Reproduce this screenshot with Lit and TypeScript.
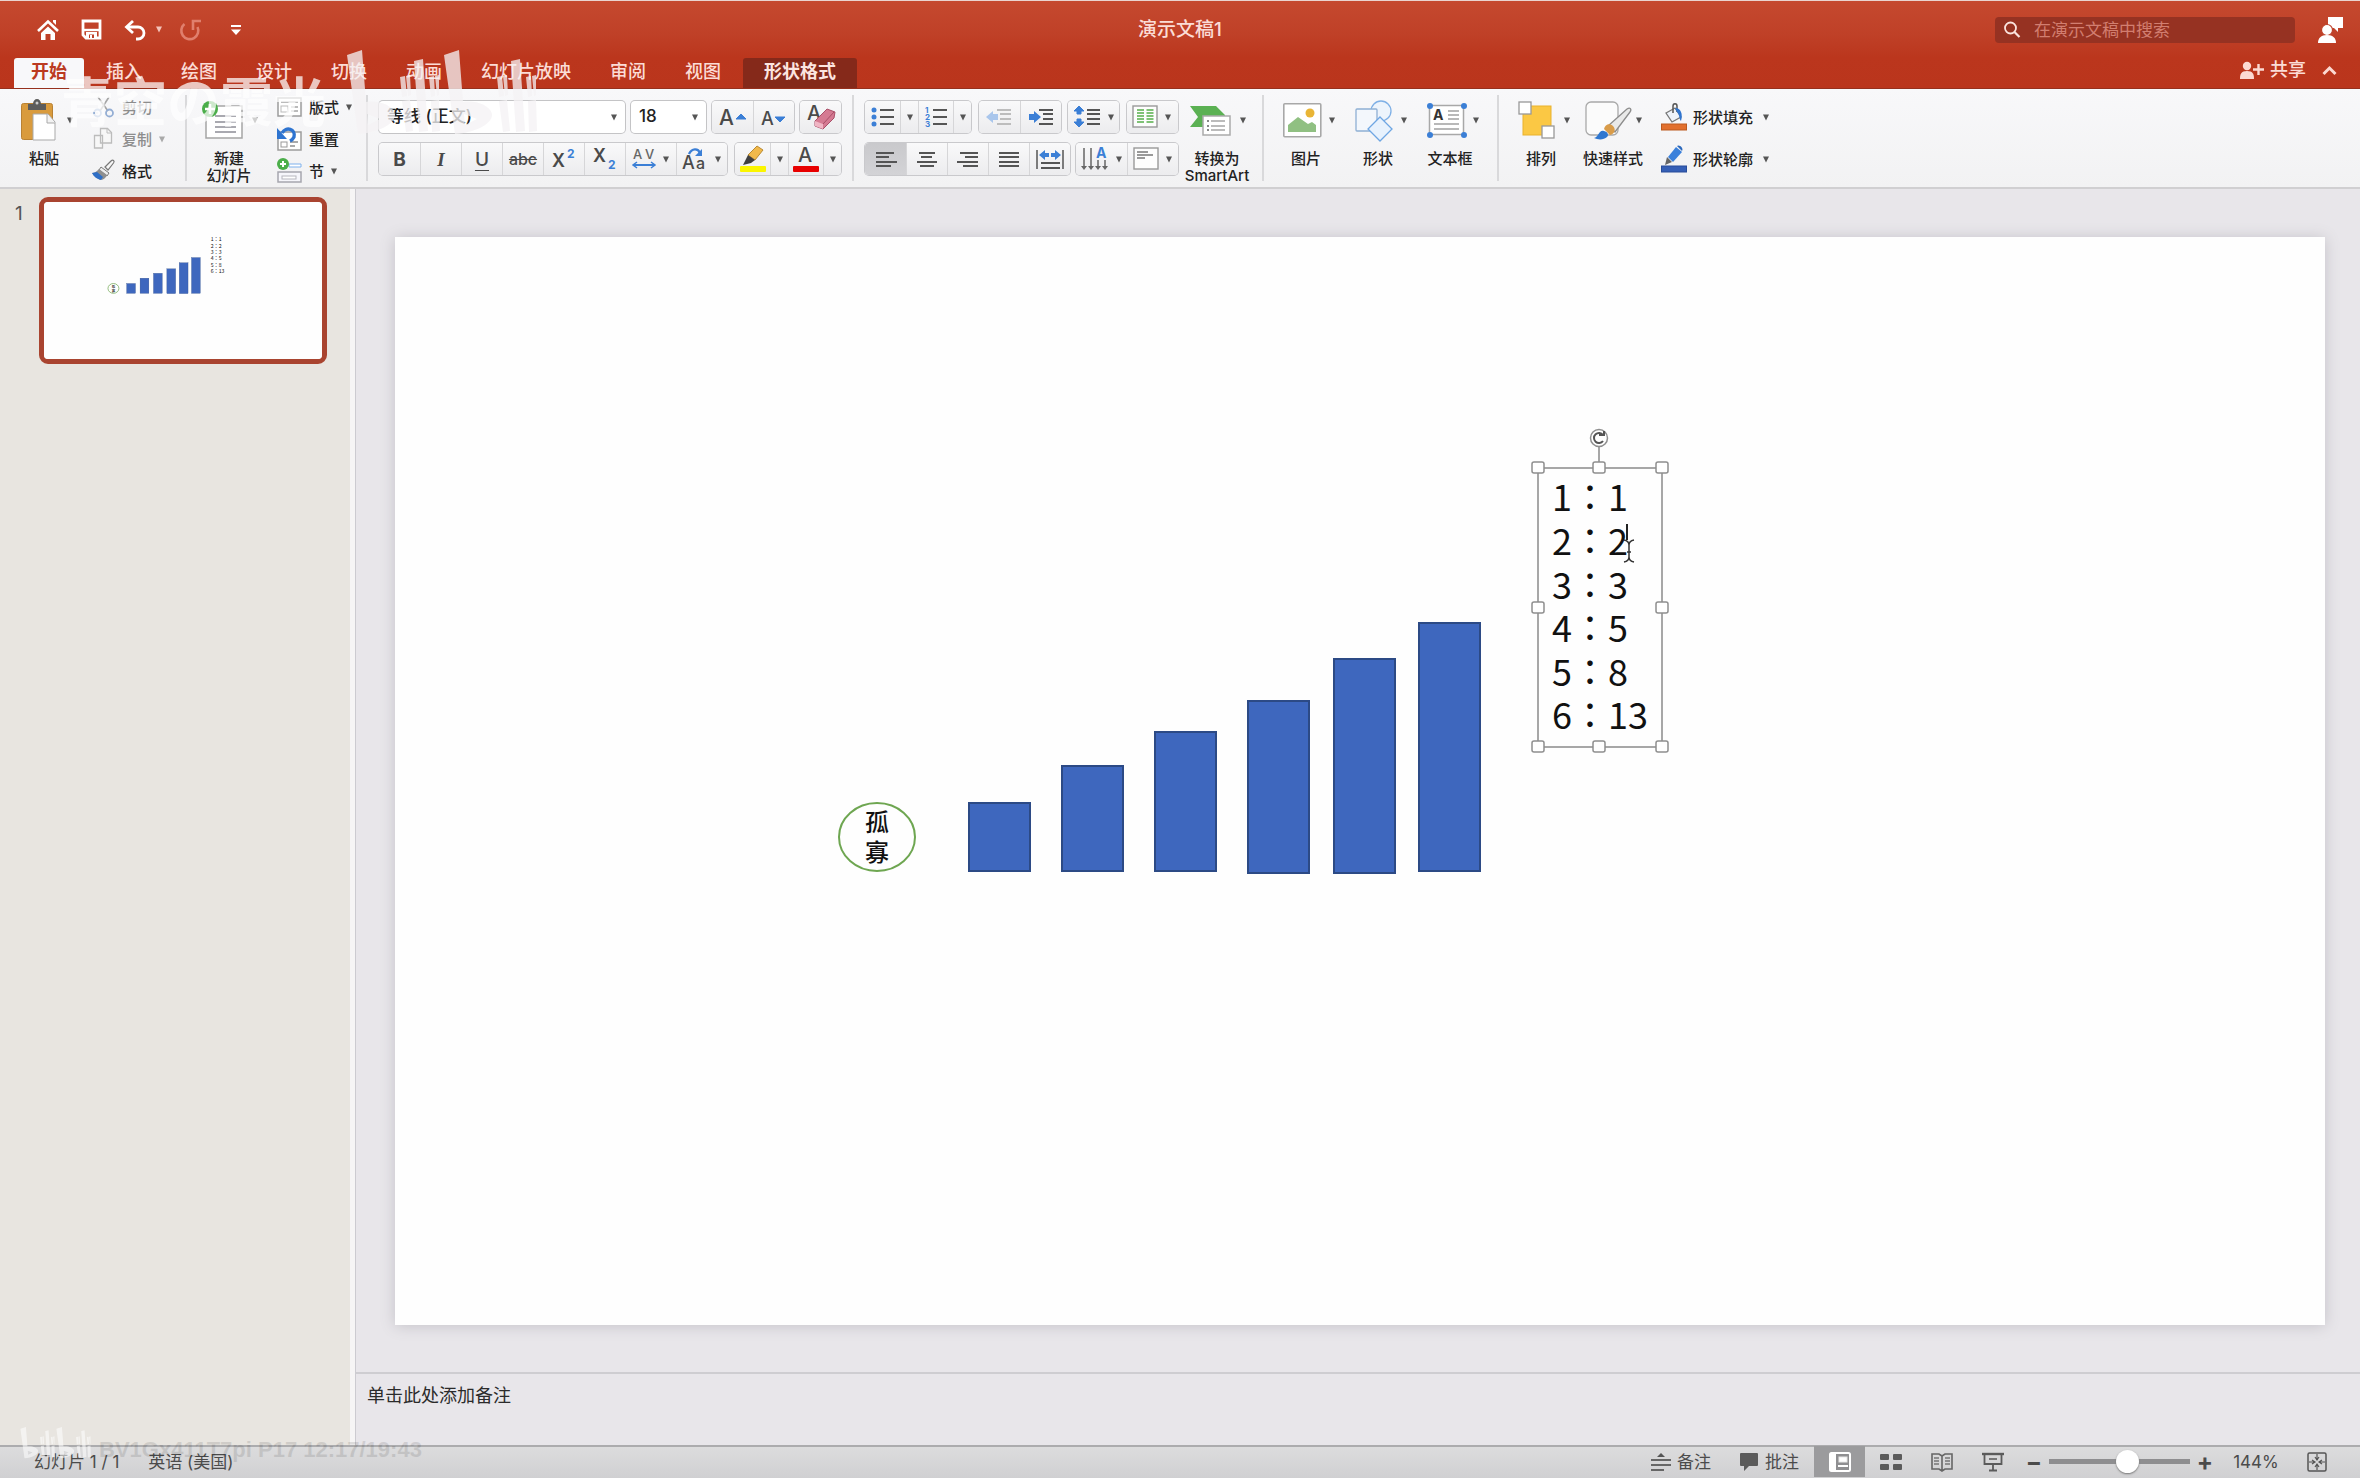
import { LitElement, html, svg, css, type TemplateResult } from "lit";
import { customElement, property, state } from "lit/decorators.js";
import { classMap } from "lit/directives/class-map.js";

type Art = TemplateResult;

/** Wraps icon shapes in an svg of the given pixel size. */
const icon = (w: number, h: number, body: Art) =>
  html`<svg class="icon" width=${w} height=${h} viewBox="0 0 ${w} ${h}" aria-hidden="true">${body}</svg>`;

const caret = (light = false) =>
  html`<svg class=${light ? "caret light" : "caret"} width="8" height="7" viewBox="0 0 8 7" aria-hidden="true"><path d="M1 0.5h6L4 6.5z" /></svg>`;

const lines = (rows: number[][], color = "#555") =>
  svg`${rows.map(([x1, x2, y]) => svg`<path d="M${x1} ${y}H${x2}" stroke=${color} stroke-width="2" />`)}`;

const BLUE = "#3b7fd6";
const DARK = "#4a4a4a";

/* ---------- title bar ---------- */
const homeIcon = icon(22, 22, svg`<path d="M1 12 11 2.500l10 9.500" fill="none" stroke="#fff" stroke-width="2.600"/><path d="M4 14l7-6.500 7 6.500v7h-4.500v-6h-5v6H4z" fill="#fff"/><path d="M16 1h3v5l-3-3z" fill="#fff"/>`);
const saveIcon = icon(21, 21, svg`<path d="M2 2h17v17H5l-3-3z" fill="none" stroke="#fff" stroke-width="2.800"/><path d="M2 11h17" stroke="#fff" stroke-width="2.400"/><path d="M5 13h11v7H5z" fill="#fff"/><path d="M8 15.500h5V19H8z" fill="#bd3f28"/><path d="M9 16h2v3H9z" fill="#fff"/>`);
const undoIcon = icon(23, 20, svg`<path d="M3 7h11a6 6 0 0 1 0 12h-2" fill="none" stroke="#fff" stroke-width="2.800"/><path d="M9 1 2.500 7 9 13" fill="none" stroke="#fff" stroke-width="2.800"/>`);
const redoIcon = icon(22, 22, svg`<path d="M4.500 5A8.500 8.500 0 1 0 17.500 8" fill="none" stroke="#e07f6d" stroke-width="2.600"/><path d="M21 2h-8v9" fill="none" stroke="#e07f6d" stroke-width="2.600"/>`);
const moreIcon = icon(12, 12, svg`<path d="M1 2h10" stroke="#fff" stroke-width="2"/><path d="M1 5.500h10L6 11z" fill="#fff"/>`);
const searchIcon = icon(18, 18, svg`<circle cx="7.500" cy="7" r="5.500" fill="none" stroke="#fbe3de" stroke-width="1.800"/><path d="m11.500 11 5 5" stroke="#fbe3de" stroke-width="2.200"/>`);
const feedbackIcon = icon(26, 26, svg`<path d="M10 0h15v11h-5v4l-4-4h-6z" fill="#fff"/><circle cx="9" cy="13" r="5.500" fill="#fff" stroke="#bd3f28" stroke-width="1.200"/><path d="M0 26c0-5 3-8 9-8s9 3 9 8z" fill="#fff"/>`);
const shareIcon = icon(24, 18, svg`<circle cx="7" cy="5" r="4.200" fill="#fcd9d2"/><path d="M0 18c0-5 1-8 7-8s7 3 7 8z" fill="#fcd9d2"/><path d="M18.500 3v11M13 8.500h11" stroke="#fcd9d2" stroke-width="2.400"/>`);
const chevronUp = icon(15, 10, svg`<path d="m1.500 8 6-6 6 6" fill="none" stroke="#fcd9d2" stroke-width="3"/>`);

/* ---------- large ribbon icons ---------- */
const pasteIcon = icon(40, 42, svg`<rect x="0.500" y="4.500" width="31" height="36" rx="2" fill="#d99b3d" stroke="#b98234"/><path d="M7 5h5a4 5 0 0 1 8 0h5v6H7z" fill="#5c5c5c"/><circle cx="16" cy="4" r="1.500" fill="#ccc"/><path d="M12 15h15l7 8v18H12z" fill="#fff" stroke="#a9a9a9"/><path d="M26 15v9h8" fill="#f2f2f2" stroke="#a9a9a9"/>`);
const newSlideIcon = icon(40, 42, svg`<rect x="0" y="7" width="36" height="32" fill="#fff" stroke="#a5a5a5" stroke-width="1.500"/>${lines([[9, 30, 17], [9, 30, 23], [9, 30, 28], [9, 30, 33]], "#a9a9b0")}<circle cx="4" cy="10" r="8" fill="#4bae4a"/><path d="M4 5v10M-1 10H9" stroke="#fff" stroke-width="2.500"/>`);
const smartArtIcon = icon(40, 36, svg`<path d="M-4 4h26l9 9v12H-4l8-10z" fill="#5bb153"/><rect x="9" y="14" width="27" height="19" fill="#fff" stroke="#aaa" stroke-width="1.500"/>${lines([[17, 31, 19], [17, 31, 24], [17, 31, 28]], "#bbb")}${lines([[13, 15, 19], [13, 15, 24], [13, 15, 28]], "#888")}`);
const pictureIcon = icon(40, 36, svg`<rect x="0.800" y="1.800" width="37" height="33" rx="1" fill="#fff" stroke="#a8a8a8" stroke-width="1.600"/><circle cx="27" cy="11" r="4.500" fill="#e9b535"/><path d="M5 30V23L15 15l10 7 4-2 4 3v7z" fill="#90c082"/>`);
const shapesIcon = icon(40, 40, svg`<circle cx="26" cy="11" r="10" fill="#edf4fc" stroke="#7fb0e6" stroke-width="1.300"/><rect x="1" y="9" width="21" height="22" rx="1" fill="#f3f7fc" stroke="#8fb0d4" stroke-width="1.300"/><path d="m25 17 12 12-12 12-12-12z" fill="#e8f2fd" stroke="#6ea6e3" stroke-width="1.300"/>`);
const textBoxIcon = icon(40, 36, svg`<rect x="2.500" y="3.500" width="34" height="29" fill="#fff" stroke="#a8a8a8" stroke-width="1.500"/>${[[3, 4], [37, 4], [3, 33], [37, 33]].map(([x, y]) => svg`<circle cx=${x} cy=${y} r="3" fill=${BLUE} />`)}<text x="6" y="18" font-size="14" font-weight="700" fill="#333">A</text>${lines([[21, 32, 9], [21, 32, 13], [21, 32, 17], [7, 32, 22], [7, 32, 27]], "#b8b8b8")}`);
const arrangeIcon = icon(40, 38, svg`<rect x="5" y="5" width="28" height="29" fill="#fbc844" stroke="#e9b22c"/><rect x="1" y="1" width="12" height="12" fill="#fff" stroke="#999" stroke-width="1.300"/><rect x="24" y="25" width="12" height="12" fill="#fff" stroke="#999" stroke-width="1.300"/>`);
const quickStyleIcon = icon(40, 40, svg`<rect x="-4" y="2" width="32" height="33" rx="5" fill="#fbfbfb" stroke="#a9a9a9" stroke-width="1.300"/><path d="M18 26 37 9c3-2 5 0 3 3L25 32z" fill="#e9e9e9" stroke="#8c8c8c" stroke-width="1.300"/><path d="M14 29c1-5 6-6 9-3s2 8-3 9z" fill="#d99c4a"/><path d="M4 38c5-1 5-9 10-7 4 1 5 4 3 6-3 3-9 3-13 1z" fill="#2f77d0"/>`);

/* ---------- small ribbon icons ---------- */
const cutIcon = icon(24, 24, svg`<path d="M6 2l10 14M17 2 8 16" stroke="#a5a5a5" stroke-width="1.600"/><circle cx="5.500" cy="18" r="3.500" fill="none" stroke="#94aed4" stroke-width="1.800"/><circle cx="17.500" cy="18" r="3.500" fill="none" stroke="#94aed4" stroke-width="1.800"/>`);
const copyIcon = icon(24, 24, svg`<path d="M2.500 8.500h8V21h-8zM8.500 1.500h7l4 4V16h-11z" fill="#f7f7f7" stroke="#bcbcbc" stroke-width="1.300"/><path d="M15 1.500V6h4.500" fill="none" stroke="#bcbcbc"/>`);
const formatIcon = icon(24, 24, svg`<path d="m13 8 6-6c2-2 4 0 2.500 2L16 11z" fill="#f6f6f6" stroke="#777" stroke-width="1.200"/><path d="m9 8 8 6-2 3-8-6z" fill="#eee" stroke="#777"/><path d="m7 10 8 6c-1 3-4 5-7 5-3-2-6-4-8-7 3 0 5-2 7-4z" fill="#8f8f8f"/><path d="M0 14c2 4 5 6 9 7l2-3-6-5z" fill="#2f6fc6"/>`);
const layoutIcon = icon(26, 24, svg`<rect x="1" y="3" width="23" height="18" fill="#fff" stroke="#9c9c9c" stroke-width="1.500"/><rect x="4" y="11" width="7" height="6" fill="none" stroke="#bbb"/>${lines([[4, 21, 7], [14, 21, 12], [14, 21, 16]], "#bbb")}`);
const resetIcon = icon(26, 24, svg`<rect x="1" y="5" width="23" height="18" fill="#fff" stroke="#9c9c9c" stroke-width="1.500"/><rect x="4" y="15" width="6" height="5" fill="none" stroke="#999"/>${lines([[13, 21, 15], [13, 18, 19]], "#aaa")}<path d="M5 6c4-7 14-4 12 4-1 2-2 3-4 4" fill="none" stroke="#2e74d0" stroke-width="3.400"/><path d="M0 1v11h10z" fill="#2e74d0"/>`);
const sectionIcon = icon(26, 26, svg`<path d="M12 6h12v3H12z" fill="#fff" stroke="#7fb1ec"/><rect x="1" y="14" width="23" height="10" fill="#f6f6fb" stroke="#a6a6ae" stroke-width="1.500"/><rect x="5" y="18" width="14" height="3" fill="#fff" stroke="#b6b6be"/><circle cx="6" cy="6" r="6" fill="#4bae4a"/><path d="M6 3v6M3 6h6" stroke="#fff" stroke-width="2"/>`);
const fillIcon = icon(26, 28, svg`<path d="m5 10 9-5 6 9-9 5z" fill="#eef3fa" stroke="#777" stroke-width="1.300"/><path d="M12 10V3c0-3 4-3 4 0v6" fill="none" stroke="#555" stroke-width="1.500"/><path d="M14 5c6 0 8 6 6 13-2-2-1-6-4-9z" fill="#2f74cf"/><rect x="0.500" y="21" width="25" height="6" fill="#e2702e" stroke="#bb5a20"/>`);
const outlineIcon = icon(26, 28, svg`<path d="m15 2 6 5-9 10-5-5z" fill="#3a80db"/><path d="m6 12 5 5-7 3z" fill="#666"/><path d="M16 1c2-2 7 2 5 5z" fill="#2c69bd"/><rect x="0.500" y="21" width="25" height="6" fill="#355fb6" stroke="#284c99"/>`);

/* ---------- segmented control icons ---------- */
const growIcon = icon(34, 24, svg`<text x="3" y="20" font-size="21" font-weight="500" fill=${DARK}>A</text><path d="m20 14 5-5 5 5z" fill=${BLUE} stroke=${BLUE}/>`);
const shrinkIcon = icon(34, 24, svg`<text x="4" y="20" font-size="18" font-weight="500" fill=${DARK}>A</text><path d="m18 12 5 5 5-5z" fill=${BLUE} stroke=${BLUE}/>`);
const eraserIcon = icon(34, 28, svg`<text x="3" y="17" font-size="20" fill=${DARK}>A</text><path d="m11 18 12-12 8 3-1 6-11 11-8-3z" fill="#d57a92" stroke="#a94f68"/><path d="m11 18 8 3v5l-8-3z" fill="#f0b5c4"/><path d="M19 21 30 9" stroke="#a94f68"/>`);
const superIcon = icon(30, 24, svg`<text x="3" y="20" font-size="18" font-weight="600" fill=${DARK}>X</text><text x="18" y="11" font-size="12" font-weight="700" fill=${BLUE}>2</text>`);
const subIcon = icon(30, 26, svg`<text x="3" y="16" font-size="18" font-weight="600" fill=${DARK}>X</text><text x="18" y="23" font-size="12" font-weight="700" fill=${BLUE}>2</text>`);
const spacingIcon = icon(24, 24, svg`<text x="1" y="12" font-size="13" font-weight="500" fill="#666">A</text><text x="13" y="12" font-size="13" font-weight="500" fill="#666">V</text><path d="M2 18h20" stroke=${BLUE} stroke-width="2"/><path d="m5 15-4 3 4 3M19 15l4 3-4 3" fill="none" stroke=${BLUE} stroke-width="1.500"/>`);
const caseIcon = icon(26, 26, svg`<text x="0" y="23" font-size="18" font-weight="500" fill=${DARK}>A</text><text x="14" y="23" font-size="16" font-weight="500" fill=${DARK}>a</text><path d="M7 8c3-6 9-6 11-1" fill="none" stroke=${BLUE} stroke-width="2.400"/><path d="M20 3v7h-7z" fill=${BLUE}/>`);
const highlightIcon = icon(28, 28, svg`<path d="m9 10 9-9 6 4-8 10z" fill="#f1b94b" stroke="#b98a34"/><path d="m9 10 7 5-4 3-8 2z" fill="#3f3f3f"/><rect x="1" y="21" width="26" height="6" rx="1" fill="#fbf500"/>`);
const fontColorIcon = icon(28, 28, svg`<text x="6" y="17" font-size="20" font-weight="500" fill=${DARK}>A</text><rect x="1" y="21" width="26" height="6" rx="1" fill="#e80000"/>`);
const bulletIcon = icon(26, 22, svg`${[4, 11, 18].map((y) => svg`<circle cx="4" cy=${y} r="2.500" fill=${BLUE} />`)}${lines([[10, 24, 4], [10, 24, 11], [10, 24, 18]])}`);
const numberIcon = icon(26, 24, svg`${[1, 2, 3].map((n, i) => svg`<text x="2" y=${8 + i * 7} font-size="8" font-weight="700" fill=${BLUE}>${n}</text>`)}${lines([[10, 24, 5], [10, 24, 12], [10, 24, 19]])}`);
const outdentIcon = icon(26, 20, svg`<path d="M0 10l7-6v3h5v6H7v3z" fill="#a9c6ec"/>${lines([[11, 25, 3], [14, 25, 7], [14, 25, 12], [11, 25, 17]], "#bdbdbd")}`);
const indentIcon = icon(26, 20, svg`<path d="M13 10 6 4v3H1v6h5v3z" fill=${BLUE}/>${lines([[11, 25, 3], [15, 25, 7], [15, 25, 12], [11, 25, 17]])}`);
const lineGapIcon = icon(28, 22, svg`<path d="M6 0 1 5h3v3h4V5h3zM6 21l-5-5h3v-3h4v3h3z" fill=${BLUE} stroke=${BLUE}/>${lines([[14, 27, 4], [14, 27, 8], [14, 27, 13], [14, 27, 18]])}`);
const columnIcon = icon(26, 24, svg`<rect x="1" y="1" width="24" height="21" fill="#fdfdfd" stroke="#999" stroke-width="1.400"/>${[5, 8, 11, 14, 17].map((y) => svg`<path d="M5 ${y}h7M14.500 ${y}h7" stroke="#7fc276" stroke-width="2"/>`)}`);
const alignRows = (rows: number[][]) => icon(24, 20, lines(rows));
const alignIcons = [
  alignRows([[2, 20, 4], [2, 15, 8], [2, 23, 13], [2, 17, 17]]),
  alignRows([[4, 20, 4], [6, 17, 8], [2, 22, 13], [5, 19, 17]]),
  alignRows([[4, 22, 4], [9, 22, 8], [1, 22, 13], [7, 22, 17]]),
  alignRows([[2, 22, 4], [2, 22, 8], [2, 22, 13], [2, 22, 17]]),
];
const distributeIcon = icon(30, 22, svg`<path d="M2 2v19M28 2v19" stroke="#555" stroke-width="1.500"/><path d="m4 7 6-5v3h4v4h-4v3zM26 7l-6-5v3h-4v4h4v3z" fill=${BLUE}/>${lines([[6, 25, 15], [6, 25, 20]])}`);
const directionIcon = icon(28, 26, svg`<path d="M3 2v20M10 2v20M17 14v8M24 14v8" stroke="#666" stroke-width="1.500"/>${[3, 10, 17, 24].map((x) => svg`<path d="M${x - 3} 20h6l-3 4z" fill="#666"/>`)}<text x="15" y="12" font-size="14" font-weight="700" fill=${BLUE}>A</text>`);
const valignIcon = icon(26, 24, svg`<rect x="1" y="1" width="24" height="21" fill="#fdfdfd" stroke="#999" stroke-width="1.400"/>${lines([[4, 15, 5], [4, 20, 8], [4, 12, 11]], "#999")}`);

/* ---------- status bar icons ---------- */
const notesIcon = icon(20, 20, svg`<path d="M6 5h8l-4-4z" fill="#555"/>${lines([[0, 20, 8], [0, 20, 13], [0, 13, 18]], "#666")}`);
const commentIcon = icon(20, 20, svg`<path d="M2 1h16a1 1 0 0 1 1 1v11a1 1 0 0 1-1 1h-8l-5 5v-5H2a1 1 0 0 1-1-1V2a1 1 0 0 1 1-1z" fill="#5b5b5b"/>`);
const viewIcons = [
  icon(22, 20, svg`<rect x="1" y="1" width="20" height="18" rx="1.500" fill="#8f8f91" stroke="#fff" stroke-width="2"/><rect x="1" y="1" width="6" height="18" fill="#fff"/><rect x="10" y="5" width="8" height="5" fill="#fff" stroke="#e9e9e9"/>${lines([[9, 19, 14]], "#fff")}`),
  icon(22, 18, svg`${[[0, 1], [13, 1], [0, 11], [13, 11]].map(([x, y]) => svg`<rect x=${x} y=${y} width="9" height="6" rx="1" fill="#5b5b5b" />`)}`),
  icon(22, 20, svg`<path d="M1 2h7l3 2 3-2h7v15h-7l-3 2-3-2H1zM11 4v14" fill="none" stroke="#666" stroke-width="1.600"/><path d="M3 6h5M3 9h5M3 12h5M14 6h5M14 9h5M14 12h5" stroke="#777" stroke-width="1.400"/>`),
  icon(22, 20, svg`<path d="M0 2h22" stroke="#5b5b5b" stroke-width="2.400"/><path d="M2.500 2v10h17V2M11 12v6M7 18.500h8" fill="none" stroke="#5b5b5b" stroke-width="1.800"/><path d="M7 7h8" stroke="#777" stroke-width="2"/>`),
];
const fitIcon = icon(20, 20, svg`<rect x="1" y="1" width="18" height="18" rx="1.500" fill="none" stroke="#555" stroke-width="1.500"/><path d="M10 2v5M10 13v5M2 10h5M13 10h5M8 5l2 3 2-3M8 15l2-3 2 3M5 8l3 2-3 2M15 8l-3 2 3 2" fill="none" stroke="#555" stroke-width="1.200"/>`);

/* ---------- slide ---------- */
const bars = [
  { x: 574, y: 566, h: 68 },
  { x: 667, y: 529, h: 105 },
  { x: 760, y: 495, h: 139 },
  { x: 853, y: 464, h: 172 },
  { x: 939, y: 422, h: 214 },
  { x: 1024, y: 386, h: 248 },
];
const pairs = ["1：1", "2：2", "3：3", "4：5", "5：8", "6：13"];
const pairBaselines = [274, 318, 362, 405, 449, 492];

const selection = () => svg`
  <g class="selection">
    <path d="M1204 210v21M1143 231h124v279h-124z" />
    <circle cx="1204" cy="201" r="8.500" />
    <path class="turn" d="M1208 198a5 5 0 1 0 0 6M1204 198h5v-4" />
    ${[[1143, 231], [1204, 231], [1267, 231], [1143, 371], [1267, 371], [1143, 510], [1204, 510], [1267, 510]].map(
      ([x, y]) => svg`<rect x=${x - 6} y=${y - 6} width="12" height="11" rx="2" />`,
    )}
    <path class="insertion" d="M1232 287v16" />
    <path class="beam" d="M1229 303q5 1 5 5 0-4 5-5M1234 308v13M1229 325q5-1 5-5 0 4 5 5M1232 315h4" />
  </g>`;

@customElement("slide-art")
class SlideArt extends LitElement {
  @property({ type: Boolean }) selected = false;

  static styles = css`
    :host { display: block; background: #fefefe; }
    svg { display: block; width: 100%; height: auto; }
    text { font-family: "Noto Sans CJK TC", "Noto Sans CJK SC", sans-serif; fill: #111; }
    .bar { fill: #3e67be; stroke: #2c4a85; stroke-width: 2; }
    .ring { fill: none; stroke: #6ea651; stroke-width: 2; }
    .small .ring { stroke-width: 5; }
    .name { font-size: 24px; font-weight: 500; text-anchor: middle; }
    .pair { font-size: 36px; }
    .selection path { fill: none; stroke: #8a8a8a; stroke-width: 1.5; }
    .selection rect, .selection circle { fill: #fff; stroke: #8f8f8f; stroke-width: 1.5; }
    .selection .turn { stroke: #555; stroke-width: 2; }
    .selection .insertion { stroke: #222; stroke-width: 2; }
    .selection .beam { stroke: #333; stroke-width: 1.5; }
  `;

  render() {
    return html`<svg class=${this.selected ? "large" : "small"} viewBox="0 0 1930 1088" role="img" aria-label="幻灯片 1">
      <ellipse class="ring" cx="482" cy="600" rx="38" ry="34" />
      <text class="name" x="482" y="594">孤</text>
      <text class="name" x="482" y="624">寡</text>
      ${bars.map((b) => svg`<rect class="bar" x=${b.x} y=${b.y} width="61" height=${b.h} />`)}
      ${pairs.map((p, i) => svg`<text class="pair" x="1157" y=${pairBaselines[i]}>${p}</text>`)}
      ${this.selected ? selection() : ""}
    </svg>`;
  }
}

const logoHalf = svg`
  <path d="M1 5 16 0l4 52c12-2 27 3 29 12 1 10-18 19-37 20zM21 64l1 11 12-6z" fill-rule="evenodd" />
  <path d="m54 27 5-1 2 20-5 1zM60 26l4-1 1 20-3 1zM56 51l8-1 3 31-7 1zM68 11l9-2 5 72-9 1zM83 27l5-1 1 20-4 1zM89 26l4-1v20l-2 1zM85 51l8-1 1 31-8 1z" />`;

const siteLogo = (name: string) => html`<svg class=${name} viewBox="0 0 194 86" aria-hidden="true">
  <g>${logoHalf}</g><g transform="translate(97 0)">${logoHalf}</g>
</svg>`;

@customElement("app-root")
class AppRoot extends LitElement {
  @state() private tab = "开始";
  @state() private align = 0;
  @state() private view = 0;

  static styles = css`
    :host { display: block; font-family: Inter, "Noto Sans CJK SC", sans-serif; color: #222; }
    * { box-sizing: border-box; }
    button, input, select { font: inherit; color: inherit; margin: 0; padding: 0; border: 0; background: none; }
    button { display: flex; align-items: center; justify-content: center; white-space: nowrap; }
    .icon { display: block; flex: none; overflow: visible; }
    .caret { flex: none; fill: #555; }
    .light { fill: #f3c3ba; }
    .dim { color: #8d8d8d; }
    .dim .caret { fill: #a9a9a9; }
    .app { position: relative; display: flex; flex-direction: column; min-height: 100vh; overflow: hidden; }

    .top { background: linear-gradient(#c5492f, #bf4027 40%, #bb361d 65%, #ba351c); border-top: 1px solid #ead4cf; border-bottom: 1px solid #96301d; color: #fbdcd6; }
    .title-row { display: grid; grid-template-columns: 1fr auto 1fr; align-items: center; height: 57px; padding: 0 16px; }
    .title { font-size: 19px; font-weight: 500; line-height: 24px; }
    .quick { display: flex; align-items: center; padding-left: 21px; }
    .quick button { margin-right: 22px; }
    .quick .tight { margin-right: 8px; }
    .quick .drop { margin-right: 17px; }
    .quick .wide { margin-right: 28px; }
    .tools { display: flex; justify-content: flex-end; align-items: center; gap: 23px; }
    .search { display: flex; align-items: center; gap: 13px; width: 300px; height: 26px; padding-left: 8px; border-radius: 4px; background: #963222; }
    .search input { flex: 1; min-width: 0; font-size: 17px; outline: none; }
    .search input::placeholder { color: #d27e70; opacity: 1; }
    .tab-row { display: flex; align-items: stretch; gap: 5px; height: 30px; padding: 0 23px 0 14px; }
    .tab { height: 30px; padding: 0 17px 2px; font-size: 18px; font-weight: 500; line-height: 24px; border-radius: 3px 3px 0 0; }
    .tab.on { background: #f8f8fa; color: #bb3a21; font-weight: 700; }
    .tab.context { padding: 0 21px 2px; background: #85291a; color: #fce5e0; font-weight: 700; }
    .grow { flex: 1; }
    .share { gap: 6px; font-size: 18px; font-weight: 500; line-height: 24px; padding-bottom: 6px; }
    .fold { margin-left: 11px; padding-bottom: 4px; }

    .ribbon { display: flex; height: 100px; background: linear-gradient(#f8f8fa, #f2f2f3); border-bottom: 2px solid #d0cfd1; font-size: 15px; line-height: 17px; font-weight: 500; }
    .group { display: flex; border-right: 2px solid #d9d9db; margin: 6px 0; }
    .group:last-child { border-right: 0; }
    .group.paste { padding-left: 8px; }
    .group.slides { padding-left: 6px; }
    .group.text { padding: 6px 11px 0; }
    .group.para { padding: 0 9px 0 11px; }
    .group.insert { padding: 0 11px 0 6px; }
    .group.style { padding-left: 6px; }
    .big { flex-direction: column; justify-content: flex-start; align-items: stretch; width: 72px; height: 87px; padding-top: 4px; }
    .big .face { display: flex; flex: none; align-items: center; gap: 5px; height: 42px; padding-left: 13px; margin-bottom: 9px; }
    .big .name { text-align: center; }
    .list { display: flex; flex-direction: column; margin: -4px 0 -6px; }
    .paste .list { width: 105px; padding-left: 12px; }
    .slides .list { width: 101px; padding-left: 12px; }
    .row { flex: none; height: 32px; justify-content: flex-start; gap: 6px; }
    .style .list { margin: 6px 0 0 12px; gap: 10px; }
    .style .row .caret { margin-left: 3px; }

    .bench { display: flex; flex-direction: column; gap: 10px; }
    .para .bench { padding-top: 6px; margin-right: 3px; }
    .line { display: flex; justify-content: space-between; gap: 6px; }
    .seg { display: flex; height: 32px; border-radius: 4px; box-shadow: 0 0 0 1px #c9c9cc; background: linear-gradient(#f9f9fa, #ececee); overflow: hidden; }
    .seg button { gap: 6px; border-left: 1px solid #d6d6d8; color: #4a4a4a; font-size: 19px; }
    .seg button:first-child { border-left: 0; }
    .w18 { width: 18px; }
    .w35 { width: 35px; }
    .w41 { width: 41px; }
    .w51 { width: 51px; }
    .seg .pressed { background: linear-gradient(#c9c9cc, #d3d3d6); }
    .bold { font-weight: 700; }
    .italic { font-style: italic; font-family: "Liberation Serif", serif; font-weight: 700; }
    .under { text-decoration: underline; text-underline-offset: 4px; }
    .seg .strike { font-size: 16px; text-decoration: line-through; }
    .combo { display: flex; align-items: center; position: relative; height: 32px; border-radius: 4px; box-shadow: 0 0 0 1px #c4c4c6; background: #fff; font-size: 17px; }
    .combo select { appearance: none; width: 100%; height: 100%; padding: 0 28px 2px 8px; outline: none; }
    .combo .caret { position: absolute; right: 7px; pointer-events: none; }
    .face-name { width: 246px; }
    .face-size { width: 75px; }

    .work { flex: 1; display: flex; }
    .rail { display: flex; align-items: flex-start; gap: 15px; flex: none; width: 355px; padding: 8px 0 0 15px; background: #e8e5e0; border-right: 5px solid #f6f5f5; font-size: 19px; line-height: 24px; color: #555; }
    .rail .index { padding-top: 5px; width: 9px; }
    .thumb { display: block; width: 288px; padding: 0; border: 5px solid #a94430; border-radius: 9px; overflow: hidden; }
    .thumb slide-art { width: 100%; }
    .stage { flex: 1; display: flex; flex-direction: column; min-width: 0; border-left: 1px solid #cccbd0; background: #e8e6ea; }
    .canvas { flex: 1; padding: 48px 35px 47px 39px; }
    .canvas slide-art { box-shadow: 0 1px 14px #c4c2c8; }
    .notes { height: 73px; padding: 10px 11px; border-top: 2px solid #cecdd1; font-size: 18px; line-height: 24px; }
    .notes input { width: 100%; outline: none; }
    .notes input::placeholder { color: #2b2b2b; opacity: 1; }

    .status { display: flex; align-items: center; height: 33px; border-top: 2px solid #acacae; background: linear-gradient(#dcdcdd, #d0d0d2); padding: 0 33px 2px 34px; font-size: 17px; line-height: 20px; color: #4b4b4b; }
    .status button { height: 31px; }
    .lang { margin-left: 29px; }
    .note-toggle { gap: 6px; margin-right: 28px; }
    .comment-toggle { gap: 6px; margin-right: 15px; }
    .view { width: 51px; }
    .view.on { background: #9b9b9d; }
    .step { width: 22px; font-size: 24px; font-weight: 700; }
    .zoom { display: flex; align-items: center; margin-left: 5px; }
    .zoom input { appearance: none; width: 141px; height: 24px; margin: 0 4px; background: linear-gradient(#8e8e90, #8e8e90) center / 100% 5px no-repeat; }
    .zoom input::-webkit-slider-thumb { appearance: none; width: 23px; height: 23px; border-radius: 50%; background: #fff; box-shadow: 0 1px 2px #777; }
    .percent { width: 50px; margin: 0 26px 0 15px; text-align: center; }

    .credit { position: absolute; left: 61px; top: 69px; font-size: 53px; line-height: 68px; font-weight: 700; color: #fff; opacity: 0.72; pointer-events: none; }
    .logo-big { position: absolute; left: 346px; top: 50px; width: 194px; fill: #f5f3f5; opacity: 0.76; pointer-events: none; }
    .logo-small { position: absolute; left: 20px; bottom: 19px; width: 72px; fill: #fff; opacity: 0.55; pointer-events: none; }
    .source { position: absolute; left: 99px; bottom: 16px; font-family: "Liberation Sans", sans-serif; font-size: 22px; line-height: 24px; font-weight: 700; color: #000; opacity: 0.1; pointer-events: none; }
  `;

  private big(art: Art, name: Art | string) {
    return html`<button class="big"><span class="face">${art}${caret()}</span><span class="name">${name}</span></button>`;
  }

  private row(art: Art, name: string, drop = false, dim = false) {
    return html`<button class=${classMap({ row: true, dim })}>${art}<span>${name}</span>${drop ? caret() : ""}</button>`;
  }

  private tabButton(name: string, context = false) {
    return html`<button class=${classMap({ tab: true, on: this.tab === name, context })} @click=${() => (this.tab = name)}>${name}</button>`;
  }

  private header() {
    return html`<header class="top">
      <div class="title-row">
        <div class="quick">
          <button aria-label="主页">${homeIcon}</button>
          <button aria-label="保存">${saveIcon}</button>
          <button class="tight" aria-label="撤消">${undoIcon}</button>
          <button class="drop" aria-label="撤消选项">${caret(true)}</button>
          <button class="wide" aria-label="重做">${redoIcon}</button>
          <button aria-label="自定义">${moreIcon}</button>
        </div>
        <div class="title">演示文稿1</div>
        <div class="tools">
          <label class="search">${searchIcon}<input type="search" aria-label="搜索" placeholder="在演示文稿中搜索" /></label>
          <button aria-label="反馈">${feedbackIcon}</button>
        </div>
      </div>
      <nav class="tab-row">
        ${["开始", "插入", "绘图", "设计", "切换", "动画", "幻灯片放映", "审阅", "视图"].map((t) => this.tabButton(t))}
        ${this.tabButton("形状格式", true)}
        <span class="grow"></span>
        <button class="share">${shareIcon}共享</button>
        <button class="fold" aria-label="折叠功能区">${chevronUp}</button>
      </nav>
    </header>`;
  }

  private ribbon() {
    return html`<div class="ribbon">
      <div class="group paste">
        ${this.big(pasteIcon, "粘贴")}
        <div class="list">${this.row(cutIcon, "剪切", false, true)}${this.row(copyIcon, "复制", true, true)}${this.row(formatIcon, "格式")}</div>
      </div>
      <div class="group slides">
        ${this.big(newSlideIcon, html`新建<br />幻灯片`)}
        <div class="list">${this.row(layoutIcon, "版式", true)}${this.row(resetIcon, "重置")}${this.row(sectionIcon, "节", true)}</div>
      </div>
      <div class="group text">
        <div class="bench">
          <div class="line">
            <label class="combo face-name"><select aria-label="字体"><option>等线 (正文)</option></select>${caret()}</label>
            <label class="combo face-size"><select aria-label="字号"><option>18</option></select>${caret()}</label>
            <div class="seg"><button class="w41" aria-label="增大字号">${growIcon}</button><button class="w41" aria-label="减小字号">${shrinkIcon}</button></div>
            <div class="seg"><button class="w41" aria-label="清除格式">${eraserIcon}</button></div>
          </div>
          <div class="line">
            <div class="seg">
              <button class="w41 bold">B</button><button class="w41 italic">I</button><button class="w41 under">U</button><button class="w41 strike">abc</button>
              <button class="w41" aria-label="上标">${superIcon}</button><button class="w41" aria-label="下标">${subIcon}</button>
              <button class="w51" aria-label="字符间距">${spacingIcon}${caret()}</button><button class="w51" aria-label="更改大小写">${caseIcon}${caret()}</button>
            </div>
            <div class="seg">
              <button class="w35" aria-label="突出显示">${highlightIcon}</button><button class="w18" aria-label="突出显示颜色">${caret()}</button>
              <button class="w35" aria-label="字体颜色">${fontColorIcon}</button><button class="w18" aria-label="更多字体颜色">${caret()}</button>
            </div>
          </div>
        </div>
      </div>
      <div class="group para">
        <div class="bench">
          <div class="line">
            <div class="seg">
              <button class="w35" aria-label="项目符号">${bulletIcon}</button><button class="w18" aria-label="项目符号选项">${caret()}</button>
              <button class="w35" aria-label="编号">${numberIcon}</button><button class="w18" aria-label="编号选项">${caret()}</button>
            </div>
            <div class="seg"><button class="w41" aria-label="减少缩进">${outdentIcon}</button><button class="w41" aria-label="增加缩进">${indentIcon}</button></div>
            <div class="seg"><button class="w51" aria-label="行距">${lineGapIcon}${caret()}</button></div>
            <div class="seg"><button class="w51" aria-label="分栏">${columnIcon}${caret()}</button></div>
          </div>
          <div class="line">
            <div class="seg">
              ${alignIcons.map((art, i) => html`<button class=${classMap({ w41: true, pressed: this.align === i })} aria-label="对齐 ${i + 1}" @click=${() => (this.align = i)}>${art}</button>`)}
              <button class="w41" aria-label="分散对齐">${distributeIcon}</button>
            </div>
            <div class="seg"><button class="w51" aria-label="文字方向">${directionIcon}${caret()}</button><button class="w51" aria-label="对齐文本">${valignIcon}${caret()}</button></div>
          </div>
        </div>
        ${this.big(smartArtIcon, html`转换为<br />SmartArt`)}
      </div>
      <div class="group insert">${this.big(pictureIcon, "图片")}${this.big(shapesIcon, "形状")}${this.big(textBoxIcon, "文本框")}</div>
      <div class="group style">
        ${this.big(arrangeIcon, "排列")}${this.big(quickStyleIcon, "快速样式")}
        <div class="list">${this.row(fillIcon, "形状填充", true)}${this.row(outlineIcon, "形状轮廓", true)}</div>
      </div>
    </div>`;
  }

  private statusBar() {
    return html`<footer class="status">
      <span>幻灯片 1 / 1</span><span class="lang">英语 (美国)</span>
      <span class="grow"></span>
      <button class="note-toggle">${notesIcon}备注</button>
      <button class="comment-toggle">${commentIcon}批注</button>
      ${viewIcons.map((art, i) => html`<button class=${classMap({ view: true, on: this.view === i })} aria-label="视图 ${i + 1}" @click=${() => (this.view = i)}>${art}</button>`)}
      <div class="zoom">
        <button class="step" aria-label="缩小">−</button>
        <input type="range" aria-label="缩放" min="0" max="100" value="57" />
        <button class="step" aria-label="放大">+</button>
      </div>
      <span class="percent">144%</span>
      <button aria-label="适应窗口">${fitIcon}</button>
    </footer>`;
  }

  render() {
    return html`<div class="app">
      ${this.header()}${this.ribbon()}
      <div class="work">
        <aside class="rail">
          <span class="index">1</span>
          <button class="thumb" aria-label="幻灯片 1"><slide-art></slide-art></button>
        </aside>
        <main class="stage">
          <div class="canvas"><slide-art selected></slide-art></div>
          <div class="notes"><input type="text" aria-label="备注" placeholder="单击此处添加备注" /></div>
        </main>
      </div>
      ${this.statusBar()}
      <div class="credit">青空の霞光</div>
      ${siteLogo("logo-big")}${siteLogo("logo-small")}
      <div class="source">BV1Gx411T7pi P17 12:17/19:43</div>
    </div>`;
  }
}
